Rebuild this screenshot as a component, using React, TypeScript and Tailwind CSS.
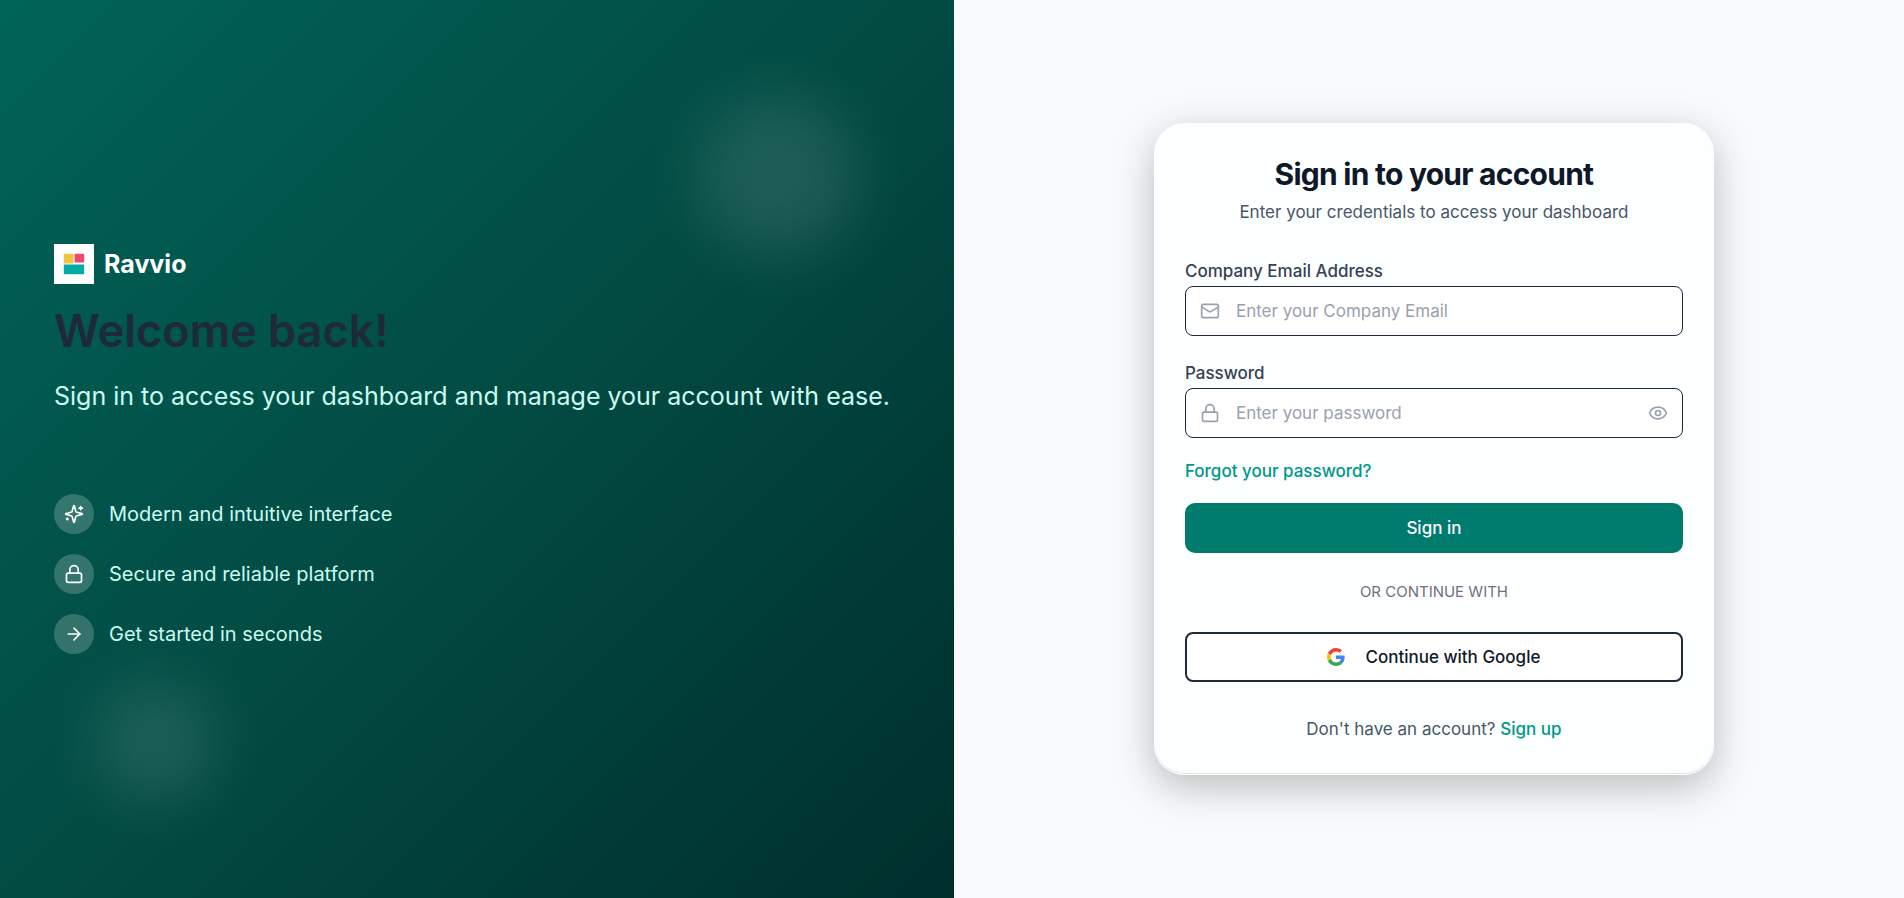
import React, { useState } from "react";
import { ArrowRight, Eye, Lock, Mail } from "lucide-react";

const SparkleIcon: React.FC<{ className?: string }> = ({ className }) => (
  <svg
    viewBox="0 0 24 24"
    fill="none"
    stroke="currentColor"
    strokeWidth="2"
    strokeLinecap="round"
    strokeLinejoin="round"
    className={className}
    aria-hidden="true"
  >
    <path d="M9.937 15.5A2 2 0 0 0 8.5 14.063l-6.135-1.582a.5.5 0 0 1 0-.962L8.5 9.936A2 2 0 0 0 9.937 8.5l1.582-6.135a.5.5 0 0 1 .963 0L14.063 8.5A2 2 0 0 0 15.5 9.937l6.135 1.581a.5.5 0 0 1 0 .964L15.5 14.063a2 2 0 0 0-1.437 1.437l-1.582 6.135a.5.5 0 0 1-.963 0z" />
    <path d="M20 3v4" />
    <path d="M22 5h-4" />
    <path d="M4 17v2" />
    <path d="M5 18H3" />
  </svg>
);

const features = [
  { icon: SparkleIcon, label: "Modern and intuitive interface" },
  { icon: Lock, label: "Secure and reliable platform" },
  { icon: ArrowRight, label: "Get started in seconds" },
];

const LogoMark: React.FC = () => (
  <svg viewBox="0 0 40 40" className="h-10 w-10" aria-hidden="true">
    <rect width="40" height="40" fill="#ffffff" />
    <rect x="9.8" y="9.8" width="9.6" height="9.6" rx="0.8" fill="#efc53f" />
    <rect x="20.6" y="9.8" width="9.6" height="8.6" rx="0.8" fill="#ef476f" />
    <rect x="9.8" y="20.6" width="20.4" height="9.6" rx="0.8" fill="#06aaa6" />
  </svg>
);

const GoogleIcon: React.FC = () => (
  <svg viewBox="0 0 48 48" className="h-[18px] w-[18px]" aria-hidden="true">
    <path fill="#EA4335" d="M24 9.5c3.54 0 6.71 1.22 9.21 3.6l6.85-6.85C35.9 2.38 30.47 0 24 0 14.62 0 6.51 5.38 2.56 13.22l7.98 6.19C12.43 13.72 17.74 9.5 24 9.5z" />
    <path fill="#4285F4" d="M46.98 24.55c0-1.57-.15-3.09-.38-4.55H24v9.02h12.94c-.58 2.96-2.26 5.48-4.78 7.18l7.73 6c4.51-4.18 7.09-10.36 7.09-17.65z" />
    <path fill="#FBBC05" d="M10.53 28.59c-.48-1.45-.76-2.99-.76-4.59s.27-3.14.76-4.59l-7.98-6.19C.92 16.46 0 20.12 0 24c0 3.88.92 7.54 2.56 10.78l7.97-6.19z" />
    <path fill="#34A853" d="M24 48c6.48 0 11.93-2.13 15.89-5.81l-7.73-6c-2.15 1.45-4.92 2.3-8.16 2.3-6.26 0-11.57-4.22-13.47-9.91l-7.98 6.19C6.51 42.62 14.62 48 24 48z" />
  </svg>
);

const WelcomePanel: React.FC = () => (
  <section className="relative flex w-[50.1%] flex-col justify-center overflow-hidden bg-linear-135 from-[#006458] via-[#024b43] to-[#002f2c] px-[54px] py-12">
    {/* Soft glows */}
    <div className="absolute top-24 right-24 h-40 w-40 rounded-full bg-white/11 blur-[30px]" />
    <div className="absolute bottom-24 left-24 h-30 w-30 rounded-full bg-white/11 blur-[30px]" />

    <div className="relative">
      <div className="flex items-center gap-2.5">
        <LogoMark />
        <span className="text-[25px] leading-8 font-bold text-white">Ravvio</span>
      </div>

      <h1 className="mt-5 text-[45px] leading-[54px] font-semibold text-gray-800">Welcome back!</h1>
      <p className="mt-5 text-[25px] leading-9 whitespace-nowrap text-teal-100">
        Sign in to access your dashboard and manage your account with ease.
      </p>

      <ul className="mt-20 flex flex-col gap-5">
        {features.map(({ icon: Icon, label }) => (
          <li key={label} className="flex items-center gap-[15px]">
            <span className="flex h-10 w-10 items-center justify-center rounded-full bg-white/20">
              <Icon className="h-5 w-5 text-white" />
            </span>
            <span className="text-xl text-teal-100">{label}</span>
          </li>
        ))}
      </ul>
    </div>
  </section>
);

const SignInCard: React.FC = () => {
  const [showPassword, setShowPassword] = useState(false);

  return (
    <div className="w-full max-w-[560px] rounded-[30px] border border-white bg-[#fbffff] px-[30px] pt-8 pb-[33px] text-[17px] leading-6 shadow-[0_12px_40px_rgba(0,0,0,0.25),inset_0_-1px_1px_rgba(0,0,0,0.1)]">
      <div className="text-center">
        <h2 className="text-3xl leading-9 font-bold tracking-tight text-gray-900">Sign in to your account</h2>
        <p className="mt-2 text-gray-600">Enter your credentials to access your dashboard</p>
      </div>

      <form className="mt-[35px]" onSubmit={(e) => e.preventDefault()}>
        <label htmlFor="email" className="block font-medium text-gray-700">
          Company Email Address
        </label>
        <div className="mt-[3px] flex h-[50px] items-center gap-4 rounded-lg border border-gray-800 bg-white px-3.5">
          <Mail className="h-5 w-5 shrink-0 text-gray-400" />
          <input
            id="email"
            type="email"
            placeholder="Enter your Company Email"
            className="min-w-0 flex-1 text-gray-900 placeholder-gray-400 outline-none"
          />
        </div>

        <label htmlFor="password" className="mt-[25px] block font-medium text-gray-700">
          Password
        </label>
        <div className="mt-[3px] flex h-[50px] items-center gap-4 rounded-lg border border-gray-800 bg-white px-3.5">
          <Lock className="h-5 w-5 shrink-0 text-gray-400" />
          <input
            id="password"
            type={showPassword ? "text" : "password"}
            placeholder="Enter your password"
            className="min-w-0 flex-1 text-gray-900 placeholder-gray-400 outline-none"
          />
          <button
            type="button"
            aria-label="Show password"
            onClick={() => setShowPassword(!showPassword)}
            className="cursor-pointer text-gray-400"
          >
            <Eye className="h-5 w-5" />
          </button>
        </div>

        <a href="#forgot" className="mt-[21px] block w-fit font-medium text-teal-600">
          Forgot your password?
        </a>
        <button
          type="submit"
          className="mt-5 h-[50px] w-full cursor-pointer rounded-[10px] bg-[#007c6f] font-medium text-white"
        >
          Sign in
        </button>
      </form>

      <div className="mt-[29px] mb-[30px] flex justify-center">
        <span className="bg-white px-2.5 text-[15px] leading-5 text-gray-500 uppercase">Or continue with</span>
      </div>

      <button
        type="button"
        className="flex h-[50px] w-full cursor-pointer items-center justify-center gap-5 rounded-lg border-2 border-gray-800 bg-white font-medium text-gray-900"
      >
        <GoogleIcon />
        Continue with Google
      </button>

      <p className="mt-[35px] text-center text-gray-600">
        Don't have an account?{" "}
        <a href="#signup" className="font-medium text-teal-600">
          Sign up
        </a>
      </p>
    </div>
  );
};

export default function App() {
  return (
    <main className="flex min-h-screen bg-gray-50 font-['Inter',sans-serif]">
      <WelcomePanel />
      <section className="flex flex-1 items-center justify-center py-12 pr-5 pl-[30px]">
        <SignInCard />
      </section>
    </main>
  );
}
